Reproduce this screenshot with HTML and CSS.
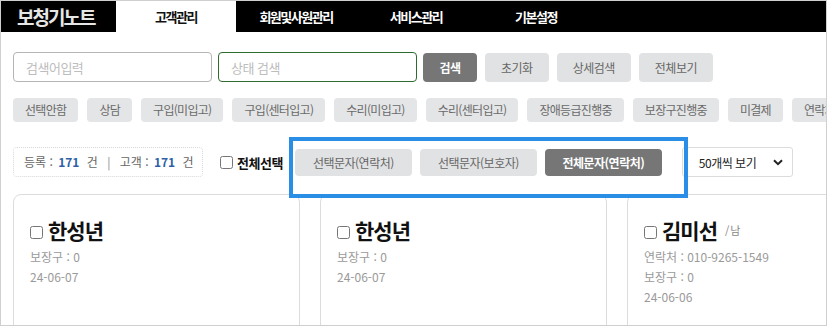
FILE: index.html
```html
<!DOCTYPE html>
<html lang="ko">
<head>
    <meta charset="UTF-8">
    <meta name="viewport" content="width=device-width, initial-scale=1.0">
    <title>보청기노트 - 고객관리</title>
    <link rel="stylesheet" href="styles.css">
</head>
<body>

<div class="frame">
    <!-- 상단 메뉴 -->
    <div class="gnb">
        <div class="logo">보청기노트</div>
        <a class="on" href="#">고객관리</a>
        <a href="#">회원및사원관리</a>
        <a href="#">서비스관리</a>
        <a href="#">기본설정</a>
    </div>

    <div class="content">
        <!-- 검색 -->
        <div class="search-row">
            <input type="text" class="search-input" placeholder="검색어입력">
            <input type="text" class="search-input status" placeholder="상태 검색">
            <button type="button" class="btn dark btn-search">검색</button>
            <button type="button" class="btn">초기화</button>
            <button type="button" class="btn">상세검색</button>
            <button type="button" class="btn">전체보기</button>
        </div>

        <!-- 상태 태그 -->
        <div class="tag-row">
            <span class="tag">선택안함</span>
            <span class="tag">상담</span>
            <span class="tag">구입(미입고)</span>
            <span class="tag">구입(센터입고)</span>
            <span class="tag">수리(미입고)</span>
            <span class="tag">수리(센터입고)</span>
            <span class="tag">장애등급진행중</span>
            <span class="tag">보장구진행중</span>
            <span class="tag">미결제</span>
            <span class="tag">연락처없음</span>
        </div>

        <!-- 목록 도구 -->
        <div class="tool-row">
            <div class="count-box">
                등록 : <b>171</b> 건 <span class="bar">|</span> 고객 : <b>171</b> 건
            </div>
            <label class="check-all"><input type="checkbox"> 전체선택</label>
            <div class="sms-group">
                <button type="button" class="btn sms">선택문자(연락처)</button>
                <button type="button" class="btn sms">선택문자(보호자)</button>
                <button type="button" class="btn sms dark">전체문자(연락처)</button>
            </div>
            <div class="select-box">
                <span>50개씩 보기</span>
                <svg width="10" height="7" viewBox="0 0 10 7"><path d="M1 1.2 5 5.2 9 1.2" fill="none" stroke="#222" stroke-width="2"/></svg>
            </div>
        </div>

        <!-- 고객 카드 -->
        <div class="card-list">
            <div class="card">
                <div class="card-title"><input type="checkbox"> 한성년</div>
                <p>보장구 : 0</p>
                <p>24-06-07</p>
            </div>
            <div class="card">
                <div class="card-title"><input type="checkbox"> 한성년</div>
                <p>보장구 : 0</p>
                <p>24-06-07</p>
            </div>
            <div class="card">
                <div class="card-title"><input type="checkbox"> 김미선 <small>/ 남</small></div>
                <p>연락처 : 010-9265-1549</p>
                <p>보장구 : 0</p>
                <p>24-06-06</p>
            </div>
        </div>
    </div>
</div>

</body>
</html>
```

FILE: styles.css
```css
body {
    margin: 0;
    padding: 0;
    font-family: "Noto Sans CJK KR", "Noto Sans", sans-serif;
    background-color: #fff;
}

.frame {
    width: 827px;
    height: 326px;
    border: 1px solid #cfcfcf;
    box-sizing: border-box;
    overflow: hidden;
    background-color: #fff;
}

/* 상단 메뉴 */
.gnb {
    display: flex;
    height: 31px;
    background-color: #000;
}

.logo {
    width: 115px;
    box-sizing: border-box;
    padding-left: 16px;
    color: #e6e6e6;
    font-size: 19px;
    font-weight: bold;
    letter-spacing: -2px;
    line-height: 31px;
}

.gnb a {
    width: 120px;
    text-align: center;
    color: #fff;
    font-size: 13px;
    font-weight: bold;
    letter-spacing: -1.5px;
    line-height: 31px;
    text-decoration: none;
}

.gnb a.on {
    background-color: #fff;
    color: #111;
}

.content {
    padding: 0 12px;
}

/* 검색 */
.search-row {
    display: flex;
    align-items: center;
    margin-top: 20px;
}

.search-input {
    width: 199px;
    height: 30px;
    box-sizing: border-box;
    margin: 0 6px 0 0;
    padding: 0 12px;
    border: 1px solid #b5b5b5;
    border-radius: 4px;
    font-family: inherit;
    font-size: 13px;
    letter-spacing: -0.5px;
}

.search-input::placeholder {
    color: #bdbdbd;
}

.search-input.status {
    border-color: #2e6b2e;
}

.btn {
    height: 29px;
    margin: 0 8px 0 0;
    padding: 0 16px;
    border: none;
    border-radius: 4px;
    background-color: #e1e2e3;
    color: #666;
    font-family: inherit;
    font-size: 12px;
    letter-spacing: -0.5px;
    cursor: pointer;
}

.btn.dark {
    background-color: #767676;
    color: #fff;
    font-weight: bold;
}

.btn-search {
    width: 54px;
    padding: 0;
}

/* 상태 태그 */
.tag-row {
    display: flex;
    gap: 9px;
    margin-top: 16px;
    white-space: nowrap;
}

.tag {
    flex-shrink: 0;
    height: 24px;
    padding: 0 12px;
    border-radius: 4px;
    background-color: #e4e5e6;
    color: #6a6a6a;
    font-size: 12px;
    letter-spacing: -0.7px;
    line-height: 24px;
}

/* 목록 도구 */
.tool-row {
    display: flex;
    align-items: center;
    margin-top: 25px;
}

.count-box {
    width: 190px;
    height: 30px;
    box-sizing: border-box;
    padding-left: 10px;
    border: 1px dotted #d8d8d8;
    border-radius: 4px;
    color: #666;
    font-size: 12px;
    line-height: 28px;
    white-space: nowrap;
}

.count-box b {
    color: #2f5fa7;
    margin: 0 4px 0 2px;
}

.count-box .bar {
    margin: 0 6px;
    color: #888;
}

.check-all {
    display: flex;
    align-items: center;
    margin-left: 17px;
    color: #111;
    font-size: 13px;
    font-weight: bold;
    letter-spacing: -0.5px;
}

.check-all input {
    margin: 0 4px 0 0;
}

.sms-group {
    position: relative;
    display: flex;
    margin-left: 12px;
}

/* 안내용 파란 박스 */
.sms-group::after {
    content: "";
    position: absolute;
    left: -6px;
    top: -12px;
    right: -26px;
    bottom: -22px;
    border: 4px solid #2a8de6;
}

.btn.sms {
    height: 27px;
    width: 117px;
    margin-right: 8px;
    padding: 0;
    font-size: 12px;
}

.btn.sms:last-child {
    margin-right: 0;
}

.select-box {
    display: flex;
    align-items: center;
    justify-content: space-between;
    width: 111px;
    height: 30px;
    box-sizing: border-box;
    margin-left: 20px;
    padding: 0 9px 0 16px;
    border: 1px solid #dcdcdc;
    border-radius: 3px;
    color: #222;
    font-size: 12px;
    letter-spacing: -0.5px;
}

/* 고객 카드 */
.card-list {
    display: flex;
    gap: 20px;
    margin-top: 17px;
}

.card {
    flex-shrink: 0;
    width: 287px;
    height: 160px;
    box-sizing: border-box;
    padding: 20px 16px;
    border: 1px solid #dcdcdc;
    border-radius: 8px;
}

.card-title {
    display: flex;
    align-items: center;
    color: #111;
    font-size: 21px;
    font-weight: bold;
    letter-spacing: -1px;
    line-height: 30px;
}

.card-title input {
    margin: 4px 5px 0 0;
}

.card-title small {
    margin-left: 8px;
    color: #888;
    font-size: 11px;
    font-weight: normal;
}

.card p {
    margin: 4px 0 0;
    color: #9a9a9a;
    font-size: 12px;
    line-height: 16px;
}
```
